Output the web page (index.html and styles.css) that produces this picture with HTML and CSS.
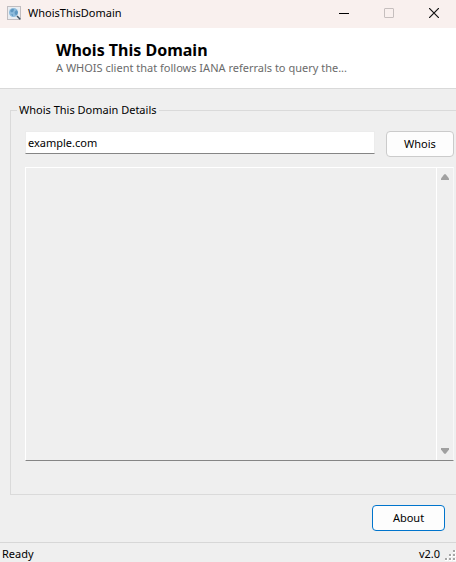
FILE: index.html
```html
<!DOCTYPE html>
<html lang="en">
<head>
<meta charset="utf-8">
<title>WhoisThisDomain</title>
<link rel="stylesheet" href="styles.css">
</head>
<body>
<div class="window">
  <div class="titlebar">
    <svg class="app-icon" width="14" height="14" viewBox="0 0 14 14" aria-hidden="true">
      <rect x=".5" y=".5" width="13" height="13" fill="#e9edf2" stroke="#c0bdc0"/>
      <circle cx="6.500" cy="6.500" r="4.500" fill="#8dbbdc"/>
      <path d="M3 5l2-2.300 2 .6-.5 2L5 6.500zM7.500 6l2-2 1.500 2-1 3-2-.5zM4 8l2 .5v2z" fill="#5e97c0"/>
      <path d="M10 10l3.200 3.200" stroke="#3f5262" stroke-width="1.500"/>
    </svg>
    <span class="caption">WhoisThisDomain</span>
    <div class="window-buttons">
      <button type="button" aria-label="Minimize"><svg width="10" height="10" viewBox="0 0 10 10"><path d="M0 5.500h10" stroke="#000"/></svg></button>
      <button type="button" aria-label="Maximize" disabled><svg width="10" height="10" viewBox="0 0 10 10"><rect x=".5" y=".5" width="9" height="9" rx=".5" fill="none" stroke="#c6bfbe"/></svg></button>
      <button type="button" aria-label="Close"><svg width="10" height="10" viewBox="0 0 10 10"><path d="M0 0l10 10M10 0L0 10" stroke="#111" stroke-width="1.200"/></svg></button>
    </div>
  </div>
  <header class="banner">
    <h1>Whois This Domain</h1>
    <p>A WHOIS client that follows IANA referrals to query the...</p>
  </header>
  <main>
    <fieldset class="details">
      <legend>Whois This Domain Details</legend>
      <div class="query">
        <input type="text" value="example.com" aria-label="Domain">
        <button type="button" class="button">Whois</button>
      </div>
      <div class="result">
        <textarea readonly aria-label="Whois result"></textarea>
        <div class="scrollbar">
          <button type="button" aria-label="Scroll up"><svg width="8" height="6" viewBox="0 0 8 6"><path d="M3.300.3h1.400L8 4.500V6H0V4.500z" fill="#a0a0a0"/></svg></button>
          <button type="button" aria-label="Scroll down"><svg width="8" height="6" viewBox="0 0 8 6"><path d="M3.300 5.700h1.400L8 1.500V0H0v1.500z" fill="#a0a0a0"/></svg></button>
        </div>
      </div>
    </fieldset>
    <div class="actions"><button type="button" class="button button-default">About</button></div>
  </main>
  <footer class="statusbar">
    <span>Ready</span>
    <span class="version">v2.0</span>
    <svg class="grip" width="12" height="14" viewBox="0 0 12 14" aria-hidden="true">
      <path d="M9 2h3v3H9zM5 6h3v3H5zM9 6h3v3H9zM1 10h3v3H1zM5 10h3v3H5zM9 10h3v3H9z" fill="#fff"/>
      <path d="M9 2h2v2H9zM5 6h2v2H5zM9 6h2v2H9zM1 10h2v2H1zM5 10h2v2H5zM9 10h2v2H9z" fill="#a6a6a6"/>
    </svg>
  </footer>
</div>
</body>
</html>
```
FILE: styles.css
```css
* { box-sizing: border-box; }

body {
  margin: 0;
  background: #efefef;
  color: #000;
  font: 11px/16px "Noto Sans", "Open Sans", sans-serif;
}

button, input, textarea { font: inherit; color: inherit; margin: 0; }
svg { display: block; }

.window {
  display: flex;
  flex-direction: column;
  min-height: 100vh;
}

.titlebar {
  display: flex;
  align-items: center;
  height: 28px;
  padding: 0 0 3px 7px;
  background: #f9f0ee;
}
.caption { margin-left: 7px; }
.window-buttons { display: flex; margin-left: auto; }
.window-buttons button {
  display: grid;
  place-items: center;
  width: 45px;
  height: 24px;
  padding: 0;
  border: 0;
  background: none;
}

.banner {
  height: 61px;
  padding: 12px 16px 0 56px;
  background: #fff;
  border-bottom: 1px solid #d9d9d9;
}
.banner h1 { margin: 0; font-size: 16px; line-height: 20px; }
.banner p { margin: 0; color: #6b6b6b; white-space: nowrap; }

main {
  flex: 1;
  display: flex;
  flex-direction: column;
}

.details {
  min-width: 0;
  margin: 13px 0 0 10px;
  padding: 13px 2px 33px 14px;
  border: 1px solid #dadada;
  border-right: 0;
}
.details legend { padding: 0 2px; margin-left: -8px; }

.query { display: flex; gap: 11px; align-items: flex-start; }
.query input {
  flex: 1;
  min-width: 0;
  height: 23px;
  padding: 0 2px 1px;
  border: 1px solid #ececec;
  border-bottom-color: #858585;
  background: #fff;
  outline: 0;
}

.button {
  width: 68px;
  height: 26px;
  padding: 0;
  border: 1px solid #cbcbcb;
  border-radius: 4px;
  background: #fdfdfd;
}
.button-default { width: 73px; border-color: #0074cc; }

/* Fills the height left by the bars and controls around it. */
.result {
  display: flex;
  height: calc(100vh - 268px);
  min-height: 80px;
  margin-top: 10px;
  border: 1px solid #fff;
  border-right-color: #f8f8f8;
  border-bottom-color: #858585;
}
.result textarea {
  flex: 1;
  min-width: 0;
  padding: 2px;
  border: 0;
  background: none;
  resize: none;
  outline: 0;
}
.scrollbar {
  display: flex;
  flex-direction: column;
  justify-content: space-between;
  width: 17px;
  border-left: 1px solid #fff;
}
.scrollbar button {
  display: grid;
  place-items: center;
  height: 18px;
  padding: 0;
  border: 0;
  background: none;
}

.actions {
  display: flex;
  justify-content: flex-end;
  padding: 10px 11px 11px;
}

.statusbar {
  display: flex;
  align-items: center;
  height: 20px;
  padding: 2px 0 0 2px;
  border-top: 1px solid #d7d7d7;
}
.version { margin-left: auto; }
.grip { margin-left: 4px; align-self: flex-end; }
```
